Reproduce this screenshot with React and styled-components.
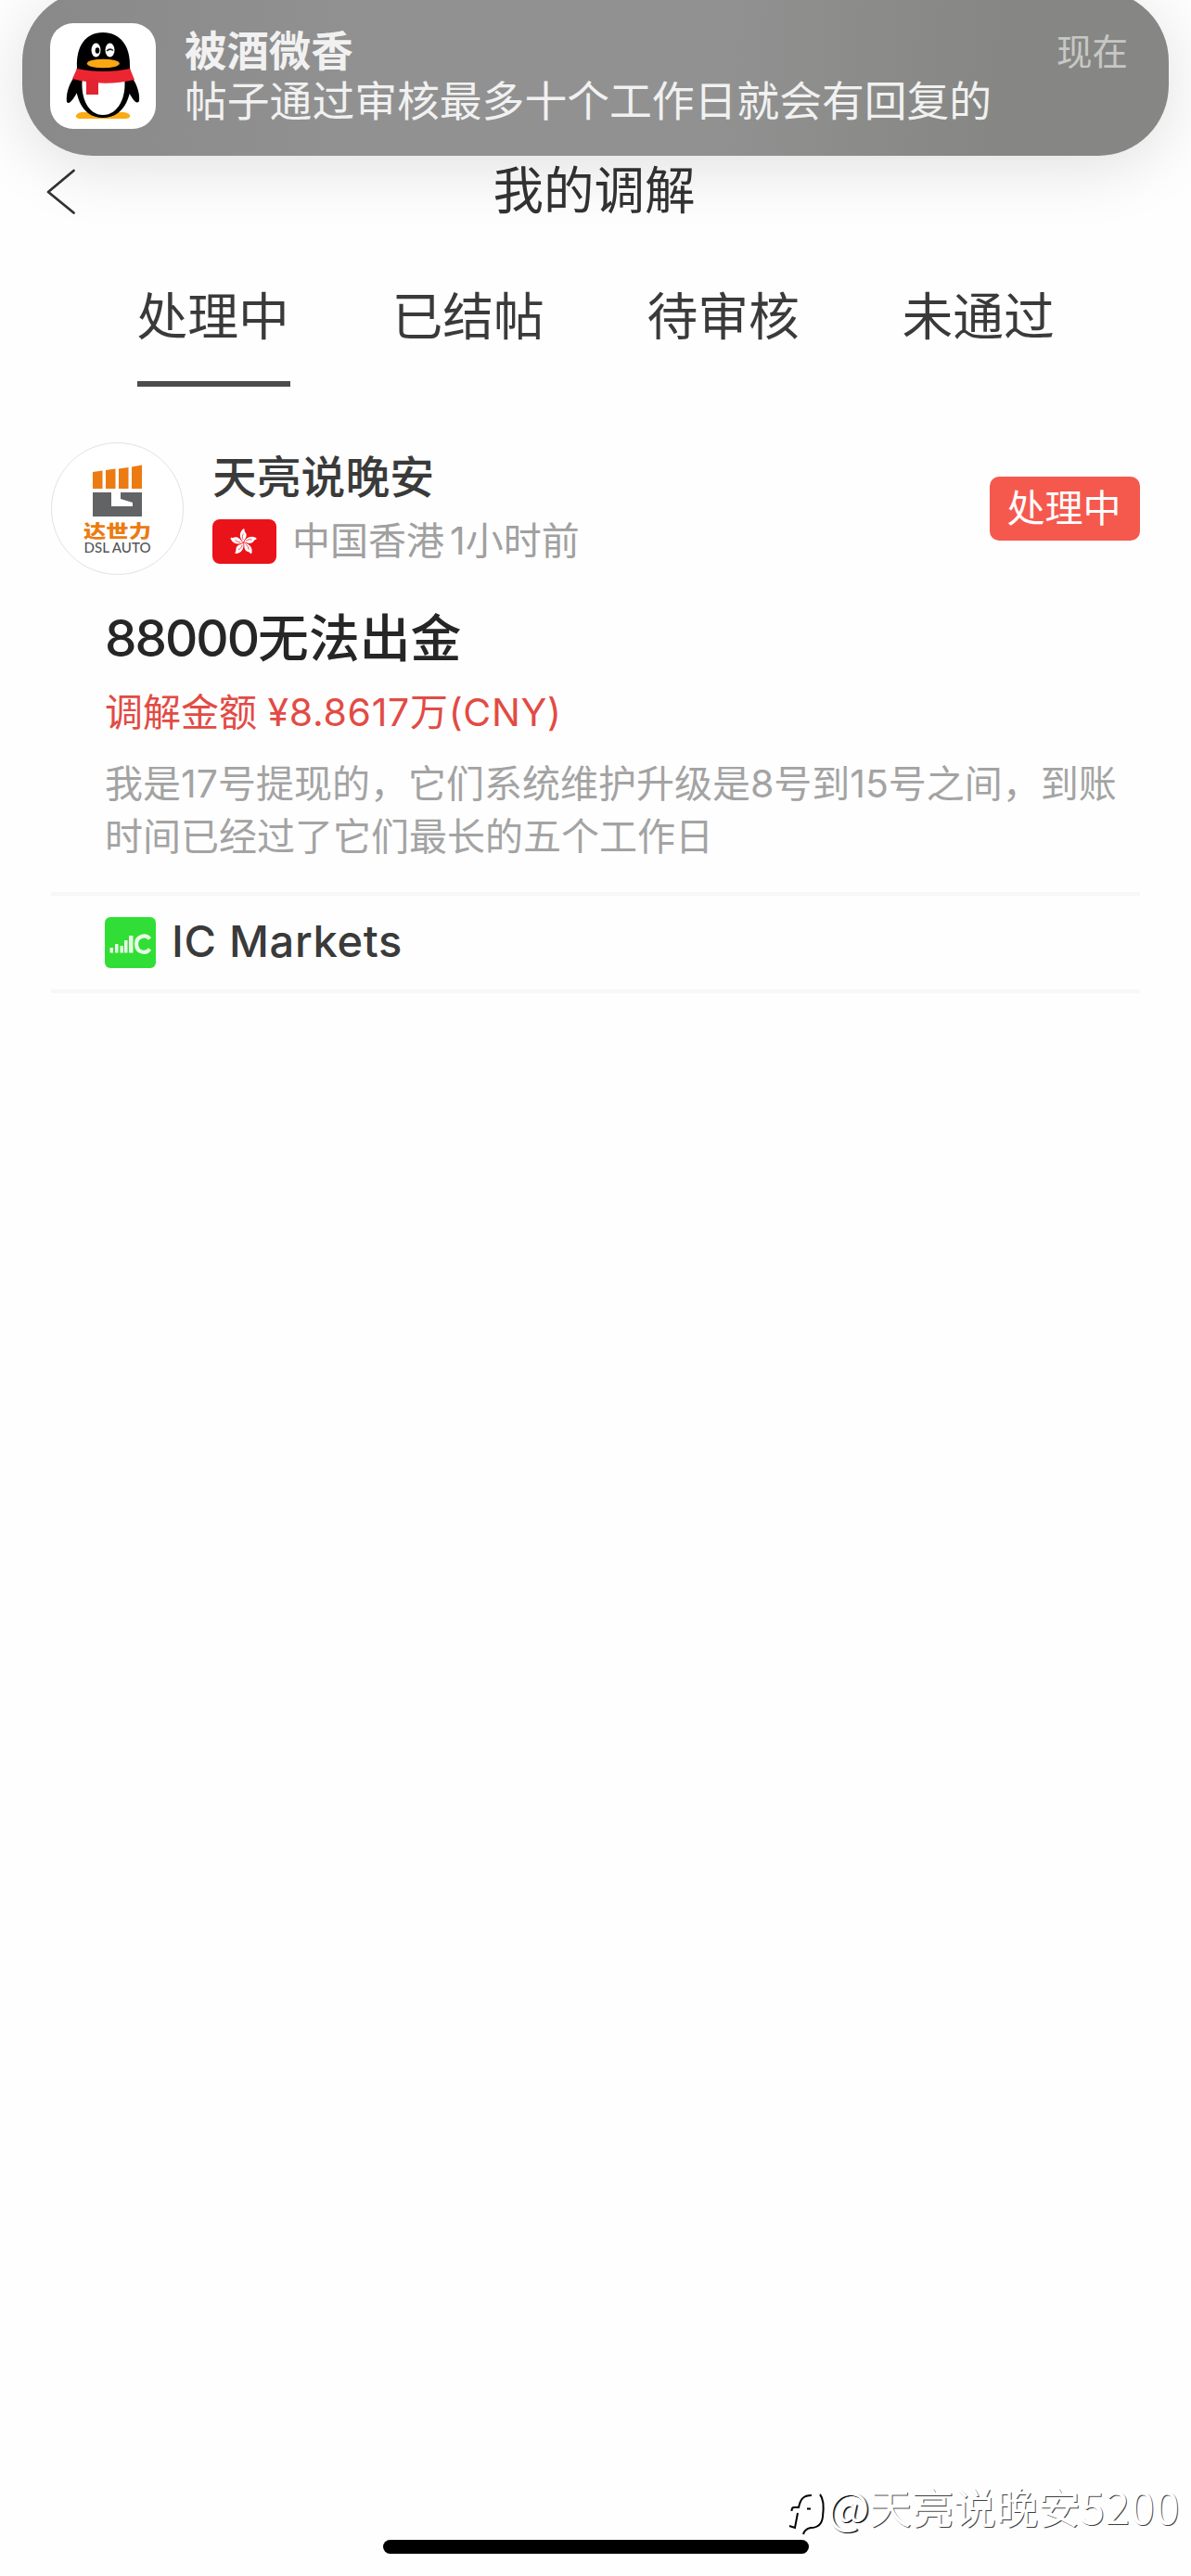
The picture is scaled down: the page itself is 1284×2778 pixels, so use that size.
import styled, { createGlobalStyle } from "styled-components";

const tabs = ["处理中", "已结帖", "待审核", "未通过"];

const posts = [
    {
        id: 1,
        user: "天亮说晚安",
        region: "中国香港",
        time: "1小时前",
        status: "处理中",
        titleAmount: "88000",
        title: "无法出金",
        amountLabel: "调解金额",
        amount: "¥8.8617万(CNY)",
        text: "我是17号提现的，它们系统维护升级是8号到15号之间，到账时间已经过了它们最长的五个工作日",
        broker: "IC Markets",
    },
];

export default function App() {
    return (
        <>
            <GlobalStyle />
            <Screen>
                <Header>
                    <BackButton aria-label="返回">
                        <BackIcon />
                    </BackButton>
                    <h1>我的调解</h1>
                </Header>

                <Tabs>
                    {tabs.map((tab, i) => (
                        <Tab key={tab} $active={i === 0}>{tab}</Tab>
                    ))}
                </Tabs>

                <main>
                    {posts.map((post) => (
                        <PostItem key={post.id} post={post} />
                    ))}
                </main>

                <Notification>
                    <AppIcon>
                        <PenguinIcon />
                    </AppIcon>
                    <NotificationBody>
                        <NotificationTitle>被酒微香</NotificationTitle>
                        <NotificationText>帖子通过审核最多十个工作日就会有回复的</NotificationText>
                    </NotificationBody>
                    <NotificationTime>现在</NotificationTime>
                </Notification>

                <Watermark>
                    <WatermarkLogo />
                    <i>@</i>
                    <span>天亮说晚安</span>
                    <b>5200</b>
                </Watermark>
                <HomeIndicator />
            </Screen>
        </>
    );
}

function PostItem({ post }) {
    return (
        <Post>
            <PostHead>
                <Avatar>
                    <DslLogo />
                </Avatar>
                <UserInfo>
                    <UserName>{post.user}</UserName>
                    <Meta>
                        <HongKongFlag />
                        <span>{post.region}</span>
                        <Time>{post.time}</Time>
                    </Meta>
                </UserInfo>
                <Status>{post.status}</Status>
            </PostHead>
            <PostContent>
                <PostTitle>
                    <span>{post.titleAmount}</span>{post.title}
                </PostTitle>
                <Amount>
                    {post.amountLabel} <span>{post.amount}</span>
                </Amount>
                <Description>{post.text}</Description>
            </PostContent>
            <Broker>
                <BrokerIcon />
                <span>{post.broker}</span>
            </Broker>
        </Post>
    );
}

function BackIcon() {
    return (
        <svg width="34" height="50" viewBox="0 0 34 50" fill="none" stroke="#333" strokeWidth="2.8" strokeLinecap="round" strokeLinejoin="round">
            <path d="M30.500 2 L3 25 L30.500 47.500" />
        </svg>
    );
}

function PenguinIcon() {
    return (
        <svg width="114" height="114" viewBox="0 0 114 114">
            <path d="M34 96 C27 97 25 103 33 103 H80 C89 103 88 97 79 96 Z" fill="#faab14" />
            <path d="M26 58 C20 66 17 77 18 85 C21 89 26 80 29 75 L32 60 Z" fill="#000" />
            <path d="M88 58 C94 66 97 77 96 84 C93 89 88 80 85 75 L82 60 Z" fill="#000" />
            <path d="M57 10 C38 10 28 25 29 48 C24 76 33 102 57 102 C81 102 91 76 86 48 C87 25 76 10 57 10 Z" fill="#000" />
            <path d="M35 58 H80 C83 80 73 99 57 99 C41 99 32 80 35 58 Z" fill="#fff" />
            <path d="M29 49 C46 53 69 53 86 49 L91 61 C70 66 46 66 24 60 Z" fill="#ec2532" />
            <path d="M39 61 H52 V77 H39 Z" fill="#e12431" />
            <ellipse cx="49.500" cy="29" rx="5" ry="7.500" fill="#fff" />
            <ellipse cx="64.500" cy="29" rx="5" ry="7.500" fill="#fff" />
            <ellipse cx="51" cy="29.500" rx="2.300" ry="3.300" fill="#000" />
            <path d="M61 30 Q64.500 26.500 68 29.500" fill="none" stroke="#222" strokeWidth="1.500" />
            <ellipse cx="57.300" cy="43.500" rx="17.500" ry="4.800" fill="#faa712" />
        </svg>
    );
}

function DslLogo() {
    return (
        <svg width="141" height="141" viewBox="0 0 141 141">
            <g fill="#ec7b12">
                <path d="M44 31 L54.500 29.500 V49 H44 Z" />
                <path d="M58 29 L68.500 27.500 V49 H58 Z" />
                <path d="M72 27.500 L82.500 26 V49 H72 Z" />
                <path d="M86 25.500 L97 23.500 V49 H86 Z" />
            </g>
            <path d="M44 53 H97 V79 H44 Z" fill="#626365" />
            <path d="M64 53 H74 V60 L87 64 V68 H64 Z" fill="#fff" />
            <text x="70.500" y="101.500" textAnchor="middle" textLength="73" lengthAdjust="spacingAndGlyphs" fontFamily="'Noto Sans CJK SC', sans-serif" fontWeight="900" fontSize="19" fill="#ec7b12">达世力</text>
            <text x="70.500" y="118" textAnchor="middle" textLength="72" lengthAdjust="spacingAndGlyphs" fontFamily="Lato, sans-serif" fontWeight="500" fontSize="14.500" fill="#55565a">DSL AUTO</text>
        </svg>
    );
}

function HongKongFlag() {
    return (
        <svg width="69" height="48" viewBox="0 0 69 48">
            <rect width="69" height="48" rx="8" fill="#ea1319" />
            {[0, 72, 144, 216, 288].map((angle) => (
                <g key={angle} transform={`translate(33.500 25) rotate(${angle})`}>
                    <path d="M0 -0.500 C-3 -3 -6 -9 -1 -14 C0 -15 1.500 -15 1 -13 C1 -11.500 4 -9.500 3 -6.500 C2.500 -4 0.500 -3 0 -0.500 Z" fill="#fff" />
                    <path d="M-0.500 -3 C-1.500 -5 -1.500 -7.500 0 -9.500" fill="none" stroke="#ea1319" strokeWidth="0.700" />
                </g>
            ))}
        </svg>
    );
}

function BrokerIcon() {
    return (
        <svg width="55" height="55" viewBox="0 0 55 55">
            <rect width="55" height="55" rx="6" fill="#31de35" />
            <g fill="#e6fbe2">
                <rect x="5.500" y="33" width="3.500" height="5.500" />
                <rect x="11" y="29" width="3.500" height="9.500" />
                <rect x="16.500" y="31" width="3.500" height="7.500" />
                <rect x="21" y="25" width="3.500" height="13.500" />
                <rect x="26" y="20" width="4.500" height="18.500" />
            </g>
            <path d="M48.500 23.500 C44 18 34 20.500 34 29 C34 38 44 40.500 48.500 34.500" fill="none" stroke="#e6fbe2" strokeWidth="4.200" />
        </svg>
    );
}

function WatermarkLogo() {
    return (
        <svg width="44" height="50" viewBox="0 0 44 50" fill="none" stroke="#000" strokeWidth="2">
            <path d="M27 7 C18 7 15 11 13 20 H8 C6 20 5.500 22 5.500 24" />
            <path d="M12 26 L9 42 L3 40" />
            <path d="M22 21.500 H26" />
            <path d="M36 6 C41 12 40 22 39 30 C38 39 33 42 26 42 C21 43 19 45 18 49" />
        </svg>
    );
}

const GlobalStyle = createGlobalStyle`
  * {
    box-sizing: border-box;
  }
  body {
    margin: 0;
    background: #fefefe;
    font-family: Inter, "Noto Sans CJK SC", sans-serif;
    color: #3a3a3a;
  }
  h1, h2, p {
    margin: 0;
  }
  svg {
    display: block;
    flex: none;
  }
`;

const Screen = styled.div`
  position: relative;
  width: 1284px;
  height: 2778px;
  overflow: hidden;
  background: #fefefe;
`;

const Header = styled.header`
  display: grid;
  grid-template-columns: 117px 1fr 120px;
  align-items: center;
  height: 240px;
  padding-top: 170px;

  h1 {
    font-size: 54.5px;
    font-weight: 400;
    line-height: 70px;
    text-align: center;
    color: #333;
  }
`;

const BackButton = styled.button`
  display: flex;
  padding: 3px 0 0 49px;
  border: 0;
  background: none;
`;

const Tabs = styled.nav`
  display: flex;
  justify-content: center;
  gap: 110px;
  padding: 71px 0 0 1px;
`;

const Tab = styled.div`
  width: 165px;
  height: 106px;
  font-size: 54.8px;
  line-height: 60px;
  white-space: nowrap;
  border-bottom: 6px solid ${(props) => (props.$active ? "#4c4c4c" : "transparent")};
`;

const Post = styled.article`
  padding: 60px 55px 0;
`;

const PostHead = styled.div`
  display: flex;
  align-items: center;
  height: 143px;
`;

const Avatar = styled.div`
  width: 143px;
  height: 143px;
  border: 1px solid #e2e2e2;
  border-radius: 50%;
  background: #fff;
  overflow: hidden;
`;

const UserInfo = styled.div`
  flex: 1;
  align-self: flex-start;
  padding: 8px 0 0 31px;
`;

const UserName = styled.div`
  font-size: 47.8px;
  font-weight: 500;
  line-height: 60px;
`;

const Meta = styled.div`
  display: flex;
  align-items: center;
  height: 48px;
  margin-top: 15px;
  font-size: 41px;
  line-height: 46px;
  color: #a0a0a0;

  svg {
    margin-right: 17px;
  }
  span {
    margin-top: -2px;
  }
`;

const Time = styled.span`
  margin-left: 6px;
`;

const Status = styled.div`
  width: 162px;
  height: 69px;
  border-radius: 10px;
  background: #f5594e;
  color: #fff;
  font-size: 41px;
  line-height: 68px;
  text-align: center;
  text-indent: -2px;
`;

const PostContent = styled.div`
  padding: 35px 0 31px 58px;
`;

const PostTitle = styled.h2`
  font-size: 54.8px;
  font-weight: 500;
  line-height: 66px;
  color: #262626;

  span {
    letter-spacing: -2px;
  }
`;

const Amount = styled.p`
  margin-top: 22px;
  font-size: 41px;
  line-height: 50px;
  color: #e24b45;

  span {
    letter-spacing: 0.7px;
  }
`;

const Description = styled.p`
  width: 1110px;
  margin-top: 24px;
  font-size: 41px;
  line-height: 57px;
  color: #a3a3a3;
`;

const Broker = styled.div`
  display: flex;
  align-items: center;
  gap: 17px;
  height: 109px;
  padding-left: 58px;
  border-top: 4px solid #f7f7f7;
  border-bottom: 4px solid #f7f7f7;
  font-size: 47px;
  font-weight: 500;
  line-height: 60px;
  letter-spacing: 0.7px;

  span {
    margin-top: -3px;
  }
`;

const Notification = styled.section`
  position: absolute;
  top: -10px;
  left: 24px;
  display: flex;
  width: 1236px;
  height: 178px;
  padding: 35px 44px 0 30px;
  border-radius: 76px;
  background: linear-gradient(95deg, #898989 0%, #919191 30%, #919191 60%, #868784 85%, #868784 100%);
  box-shadow: 0 12px 70px rgba(0, 0, 0, 0.12);
  color: #f1f1f1;
`;

const AppIcon = styled.div`
  width: 114px;
  height: 114px;
  border-radius: 25px;
  background: #fff;
`;

const NotificationBody = styled.div`
  flex: 1;
  padding: 4px 0 0 31px;
  line-height: 54px;
`;

const NotificationTitle = styled.div`
  font-size: 45.4px;
  font-weight: 700;
`;

const NotificationText = styled.div`
  font-size: 45.8px;
  white-space: nowrap;
`;

const NotificationTime = styled.time`
  padding-top: 6px;
  font-size: 38.5px;
  line-height: 50px;
  color: #c7c8c5;
`;

const Watermark = styled.div`
  position: absolute;
  right: 12px;
  top: 2672px;
  display: flex;
  align-items: center;
  height: 60px;
  color: #fff;
  font-family: "Noto Sans CJK SC", sans-serif;
  font-size: 45.5px;
  line-height: 60px;
  text-shadow: 1px 1px 0 rgba(0, 0, 0, 0.75);

  svg {
    align-self: flex-start;
    margin-top: 12px;
  }
  i {
    font-size: 48px;
    font-style: normal;
    text-shadow: 1px 1px 0 #000, 2px 1px 0 rgba(0, 0, 0, 0.5);
  }
  b {
    font-weight: 400;
    font-size: 47px;
    letter-spacing: 0.7px;
  }
`;

const HomeIndicator = styled.div`
  position: absolute;
  left: 413px;
  top: 2739px;
  width: 459px;
  height: 15px;
  border-radius: 8px;
  background: #000;
`;
